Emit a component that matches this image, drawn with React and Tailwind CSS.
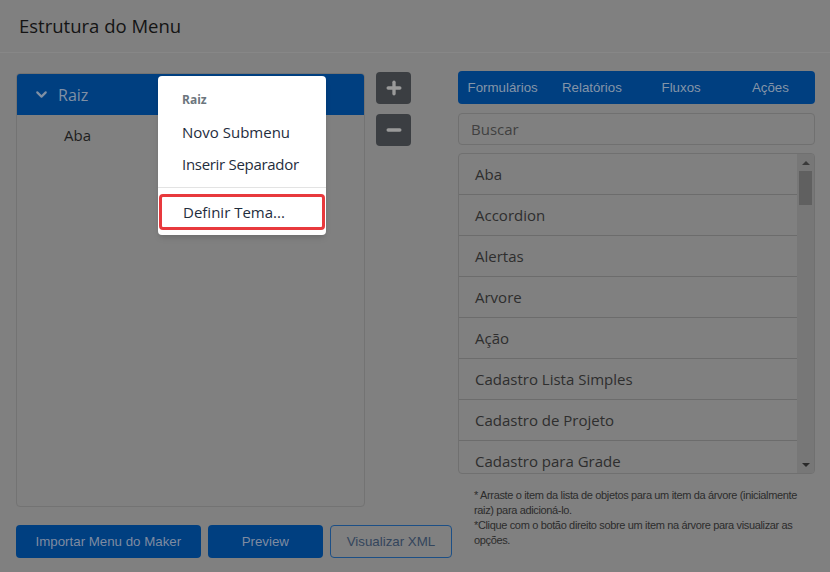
import { ChevronDown, Plus, Minus } from 'lucide-react';

const itens = [
  'Aba',
  'Accordion',
  'Alertas',
  'Arvore',
  'Ação',
  'Cadastro Lista Simples',
  'Cadastro de Projeto',
  'Cadastro para Grade',
];

const abas = ['Formulários', 'Relatórios', 'Fluxos', 'Ações'];

export default function App() {
  return (
    <div className="relative w-[830px] h-[572px] bg-[#808080] overflow-hidden" style={{ fontFamily: '"Open Sans", sans-serif' }}>
      {/* cabecalho */}
      <div className="h-[53px] border-b border-[#878787] flex items-center px-[19px]">
        <h1 className="text-[18.5px] text-[#141414]">Estrutura do Menu</h1>
      </div>

      <div className="flex px-[16px] pt-[20px] gap-[6px]">
        {/* lado esquerdo */}
        <div className="w-[436px] shrink-0 flex flex-col">
          <div className="flex gap-[11px]">
            <div className="w-[349px] h-[434px] border border-[#737373] rounded-[4px] flex flex-col">
              <div className="h-[41px] bg-[#003f80] rounded-t-[3px] flex items-center pl-[16px] gap-[8px] text-[#8090a4]">
                <ChevronDown size={17} strokeWidth={3} />
                <span className="text-[16px]">Raiz</span>
              </div>
              <div className="pl-[47px] pt-[9px] text-[15px] text-[#1e1e1e]">Aba</div>
            </div>
            <div className="flex flex-col gap-[10px] -mt-[1px]">
              <div className="w-[35px] h-[32px] rounded-[4px] bg-[#3b3e42] flex items-center justify-center text-[#9a9a9a]">
                <Plus size={20} strokeWidth={4} />
              </div>
              <div className="w-[35px] h-[32px] rounded-[4px] bg-[#3b3e42] flex items-center justify-center text-[#9a9a9a]">
                <Minus size={20} strokeWidth={4} />
              </div>
            </div>
          </div>
          <div className="flex gap-[7px] mt-[18px]" style={{ fontFamily: '"Liberation Sans", Arial, sans-serif' }}>
            <button className="w-[186px] h-[33px] rounded-[4px] bg-[#003f80] text-[#7f8ba0] text-[13.3px]">Importar Menu do Maker</button>
            <button className="w-[116px] h-[33px] rounded-[4px] bg-[#003f80] text-[#7f8ba0] text-[13.3px]">Preview</button>
            <button className="w-[123px] h-[33px] rounded-[4px] border border-[#1c4f86] text-[#33455c] text-[13.3px]">Visualizar XML</button>
          </div>
        </div>

        {/* objetos */}
        <div className="w-[357px] shrink-0 -mt-[2px]">
          <div className="h-[33px] bg-[#003f80] rounded-[4px] grid grid-cols-4 items-center text-[13.3px] text-[#8595a8]" style={{ fontFamily: '"Liberation Sans", Arial, sans-serif' }}>
            {abas.map((a) => (
              <div key={a} className="text-center">{a}</div>
            ))}
          </div>
          <div className="mt-[9px] h-[32px] border border-[#707070] rounded-[4px] flex items-center px-[12px] text-[15px] text-[#404040]">Buscar</div>
          <div className="mt-[8px] h-[321px] border border-[#707070] rounded-[4px] flex overflow-hidden">
            <div className="flex-1">
              {itens.map((i, n) => (
                <div key={i} className={`h-[41px] flex items-center pl-[16px] text-[15px] text-[#2e2e2e] ${n < itens.length - 1 ? 'border-b border-[#6c6c6c]' : ''}`}>
                  {i}
                </div>
              ))}
            </div>
            <div className="w-[17px] bg-[#777777] flex flex-col items-center">
              <div className="h-[17px] flex items-center justify-center">
                <div className="w-0 h-0 border-l-[4px] border-r-[4px] border-b-[4px] border-l-transparent border-r-transparent border-b-[#3a3a3a]" />
              </div>
              <div className="w-[13px] h-[34px] bg-[#606060]" />
              <div className="flex-1" />
              <div className="h-[17px] flex items-center justify-center">
                <div className="w-0 h-0 border-l-[4px] border-r-[4px] border-t-[4px] border-l-transparent border-r-transparent border-t-[#2a2a2a]" />
              </div>
            </div>
          </div>
          <div className="mt-[14px] pl-[16px] text-[11px] leading-[15px] tracking-[-0.35px] text-[#2c2c2c]" style={{ fontFamily: '"Liberation Sans", Arial, sans-serif' }}>
            <p>* Arraste o item da lista de objetos para um item da árvore (inicialmente raiz) para adicioná-lo.</p>
            <p>*Clique com o botão direito sobre um item na árvore para visualizar as opções.</p>
          </div>
        </div>
      </div>

      {/* menu de contexto */}
      <div className="absolute left-[158px] top-[76px] w-[168px] bg-white rounded-[4px] shadow-md pt-[14px] pb-[5px] text-[#1f2d3d] whitespace-nowrap">
        <div className="px-[24px] text-[12px] font-bold text-[#6c757d] h-[20px] flex items-center">Raiz</div>
        <div className="px-[24px] h-[32px] mt-[6px] flex items-center text-[15px]">Novo Submenu</div>
        <div className="px-[24px] h-[32px] flex items-center text-[15px] tracking-[-0.3px]">Inserir Separador</div>
        <div className="border-t border-[#e3e3e3] mt-[7px] mb-[6px]" />
        <div className="mx-[1px] h-[36px] border-[3px] border-[#e8393d] rounded-[4px] flex items-center px-[21px] text-[15px]">Definir Tema...</div>
      </div>
    </div>
  );
}
